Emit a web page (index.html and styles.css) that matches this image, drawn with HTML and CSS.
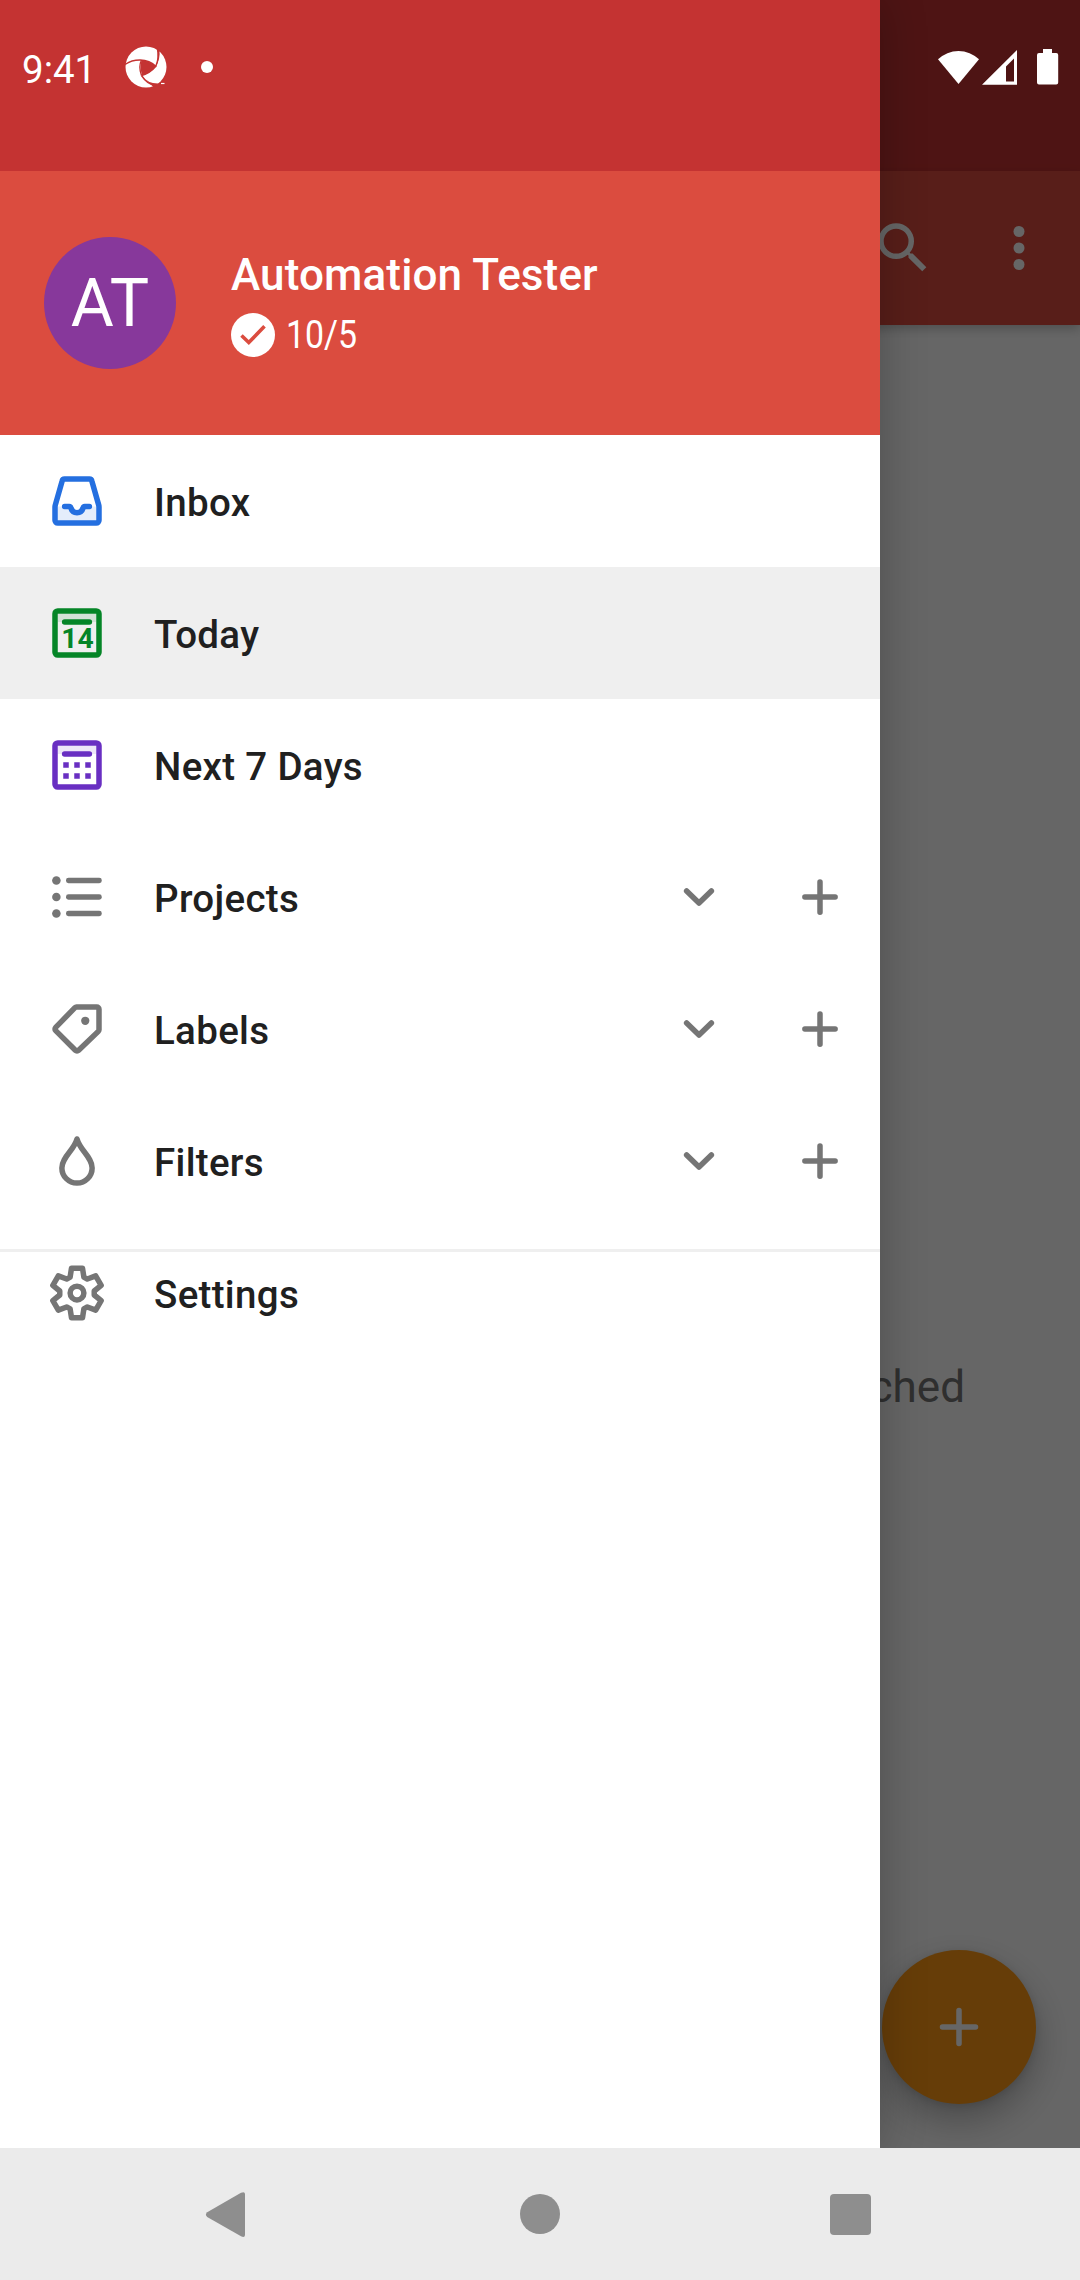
FILE: index.html
```html
<!DOCTYPE html>
<html lang="en">
<head>
<meta charset="utf-8">
<title>Todoist</title>
<link rel="stylesheet" href="styles.css">
</head>
<body>
<div class="screen">
  <main class="app">
    <div class="app-status"></div>
    <header class="toolbar">
      <svg class="icon" viewBox="0 0 24 24" fill="currentColor"><path d="M15.5 14h-.79l-.28-.27A6.47 6.47 0 0 0 16 9.5 6.5 6.5 0 1 0 9.5 16c1.61 0 3.09-.59 4.23-1.57l.27.28v.79l5 4.99L20.49 19l-4.99-5zm-6 0a4.5 4.5 0 1 1 0-9 4.5 4.5 0 0 1 0 9z"/></svg>
      <svg class="icon" viewBox="0 0 24 24" fill="currentColor"><circle cx="12" cy="6" r="2"/><circle cx="12" cy="12" r="2"/><circle cx="12" cy="18" r="2"/></svg>
    </header>
    <section class="content">
      <p class="empty">ched</p>
      <button class="fab" aria-label="Add task">
        <svg class="icon" viewBox="0 0 24 24"><path class="line" d="M12 6v12M6 12h12"/></svg>
      </button>
    </section>
  </main>
  <div class="scrim"></div>

  <aside class="drawer">
    <div class="drawer-status"></div>
    <header class="profile">
      <div class="avatar">AT</div>
      <div class="who">
        <div class="name">Automation Tester</div>
        <div class="karma">
          <svg class="check" viewBox="0 0 44 44"><circle cx="22" cy="22" r="22" fill="#fff"/><path d="M10.5 22.5l7.3 7L33.5 13.3" fill="none" stroke="#db4c3f" stroke-width="3.6"/></svg>
          <span class="count">10/5</span>
        </div>
      </div>
    </header>
    <nav class="menu">
      <a class="row">
        <svg class="icon inbox" viewBox="0 0 24 24"><path fill="currentColor" opacity=".12" d="M4.500 14H9.500c1 3 4 3 5 0H19.500V19.500H4.500z"/><path class="line" d="M7.500 4h9a.9.9 0 0 1 .9.700L19.900 13.500a3 3 0 0 1 .1.700V19a1 1 0 0 1-1 1H5a1 1 0 0 1-1-1V14.200a3 3 0 0 1 .1-.700L6.600 4.700A.9.900 0 0 1 7.500 4z"/><path class="line" d="M7.500 14h1.700c.400 0 .5.200.6.600a2.300 2.300 0 0 0 4.400 0c.1-.400.200-.600.600-.600h1.700"/></svg>
        <span class="label">Inbox</span>
      </a>
      <a class="row selected">
        <svg class="icon today" viewBox="0 0 24 24"><path fill="currentColor" opacity=".12" d="M5 5h14v3H5z"/><rect class="line" x="4" y="4" width="16" height="16" rx="1"/><path class="line" d="M7.5 8h9"/><text class="day" x="12.2" y="17.4">14</text></svg>
        <span class="label">Today</span>
      </a>
      <a class="row">
        <svg class="icon week" viewBox="0 0 24 24"><path fill="currentColor" opacity=".12" d="M5 5h14v3H5z"/><rect class="line" x="4" y="4" width="16" height="16" rx="1"/><path class="line" d="M7.5 8h9"/><path fill="currentColor" d="M7 11h2v2H7zM11 11h2v2h-2zM15 11h2v2h-2zM7 15h2v2H7zM11 15h2v2h-2zM15 15h2v2h-2z"/></svg>
        <span class="label">Next 7 Days</span>
      </a>
      <a class="row">
        <svg class="icon" viewBox="0 0 24 24" fill="currentColor"><circle cx="4.500" cy="6" r="1.550"/><circle cx="4.500" cy="12" r="1.550"/><circle cx="4.500" cy="18" r="1.550"/><rect x="8" y="5" width="13" height="2" rx=".9"/><rect x="8" y="11" width="13" height="2" rx=".9"/><rect x="8" y="17" width="13" height="2" rx=".9"/></svg>
        <span class="label">Projects</span>
        <svg class="icon" viewBox="0 0 24 24"><path class="line" d="M7.500 9.800l4.500 4.400 4.500-4.400"/></svg>
        <svg class="icon" viewBox="0 0 24 24"><path class="line" d="M12 6.500v11M6.500 12h11"/></svg>
      </a>
      <a class="row">
        <svg class="icon" viewBox="0 0 24 24"><path class="line" d="M11.800 4H19.200a.8.800 0 0 1 .8.800V12.300c0 .200-.1.400-.25.550L12.600 19.750a.85.850 0 0 1-1.200 0L4.250 12.600a.85.850 0 0 1 0-1.200L11.250 4.250c.15-.15.350-.25.550-.25z"/><circle cx="15" cy="9" r="1.500" fill="currentColor"/></svg>
        <span class="label">Labels</span>
        <svg class="icon" viewBox="0 0 24 24"><path class="line" d="M7.500 9.800l4.500 4.400 4.500-4.400"/></svg>
        <svg class="icon" viewBox="0 0 24 24"><path class="line" d="M12 6.500v11M6.500 12h11"/></svg>
      </a>
      <a class="row">
        <svg class="icon" viewBox="0 0 24 24"><path class="line" d="M12 4c-1 4-5.500 6.600-5.500 10.500a5.500 5.500 0 0 0 11 0C17.500 10.600 13 8 12 4z"/></svg>
        <span class="label">Filters</span>
        <svg class="icon" viewBox="0 0 24 24"><path class="line" d="M7.500 9.800l4.500 4.400 4.500-4.400"/></svg>
        <svg class="icon" viewBox="0 0 24 24"><path class="line" d="M12 6.500v11M6.500 12h11"/></svg>
      </a>
      <hr class="divider">
      <a class="row settings">
        <svg class="icon" viewBox="0 0 24 24"><path class="line" d="M9.500 6.200L10 3h4l.5 3.200 1.270.730 3.020-1.160 2 3.460-2.520 2.040v1.460l2.520 2.040-2 3.460-3.020-1.160-1.270.730L14 21h-4l-.5-3.200-1.270-.730-3.020 1.160-2-3.460 2.520-2.040v-1.460L3.210 9.230l2-3.460 3.020 1.160z"/><circle class="line" cx="12" cy="12" r="2.500"/></svg>
        <span class="label">Settings</span>
      </a>
    </nav>
  </aside>

  <div class="statusbar">
    <span class="clock">9:41</span>
    <svg class="logo" viewBox="0 0 42 42"><circle cx="21" cy="21" r="20.500" fill="#fff"/><g fill="none" stroke="#c43332" stroke-width="1.400"><path d="M0 18.500C8 13 22 11.500 31 20.500"/><path d="M30.500 21C33.500 14 34 9 33 3"/><path d="M31 20C27 25 22 28 16.500 29.500"/><path d="M16.500 29.500C14.500 24 14.500 18 16.500 14"/><path d="M16.500 29.500C20 35 26 39 31 39.500"/></g><path fill="#c43332" d="M16.500 14q8.500 1 14.500 6-5 7-14 9.300-2.500-8-.5-15.300zM31.500 2l3 2.500C35 10 34 15 31 20 33 14 33 8 31.500 2zM16.500 29.500Q23 38 34 37.500l-5 4z"/><path d="M36 37.500h3.500" stroke="#fff" stroke-width="1.200"/></svg>
    <span class="dot"></span>
    <svg class="system" viewBox="0 0 122 38" fill="#fff"><path d="M0 11.300a29.500 29.500 0 0 1 41 0L20.500 36z"/><path fill-rule="evenodd" d="M44 36.700L79 2v34.700zM68 18.400v15.200h8V10.500z"/><path d="M105 1h9v4h4.200a2 2 0 0 1 2 2v27.600a2 2 0 0 1-2 2h-17.200a2 2 0 0 1-2-2V7a2 2 0 0 1 2-2h4z"/></svg>
  </div>

  <footer class="navbar">
    <svg viewBox="0 0 60 60"><path d="M12.200 28.200L46 8.800q3.800-1.800 4 1.200v41q-.2 3-4 1.200L12.200 33q-2.600-2.400 0-4.800z"/></svg>
    <svg viewBox="0 0 60 60"><circle cx="30" cy="30" r="20"/></svg>
    <svg viewBox="0 0 60 60"><rect x="10" y="10" width="41" height="41" rx="4"/></svg>
  </footer>
</div>
</body>
</html>
```
FILE: styles.css
```css
* { box-sizing: border-box; }
body {
  margin: 0;
  font-family: Roboto, "Liberation Sans", sans-serif;
}
.screen {
  position: relative;
  width: 1080px;
  height: 2280px;
  overflow: hidden;
  display: flex;
  flex-direction: column;
}
.icon {
  flex: none;
  width: 66px;
  height: 66px;
  display: block;
}
.line {
  fill: none;
  stroke: currentColor;
  stroke-width: 2;
  stroke-linecap: round;
  stroke-linejoin: round;
}

/* Page behind the drawer */
.app {
  height: 2148px;
  display: flex;
  flex-direction: column;
  background: #fff;
}
.app-status, .drawer-status {
  flex: none;
  height: 171px;
  background: #c43332;
}
.toolbar {
  flex: none;
  height: 154px;
  padding-right: 28px;
  display: flex;
  justify-content: flex-end;
  align-items: center;
  gap: 50px;
  color: #fff;
  background: #db4c3f;
  box-shadow: 0 4px 10px rgba(0, 0, 0, .22);
}
.content {
  flex: 1;
  display: flex;
  flex-direction: column;
  justify-content: space-between;
  align-items: flex-end;
  padding: 1036px 44px 44px 0;
}
.empty {
  margin: 0 71px 0 0;
  font-size: 44px;
  line-height: 52px;
  color: #757575;
}
.fab {
  width: 154px;
  height: 154px;
  padding: 0;
  border: 0;
  border-radius: 50%;
  display: grid;
  place-items: center;
  color: #fff;
  background: #ff9a14;
  box-shadow: 0 16px 36px rgba(0, 0, 0, .28), 0 2px 8px rgba(0, 0, 0, .12);
}
.scrim {
  position: absolute;
  inset: 0 0 132px 0;
  background: rgba(0, 0, 0, .6);
}

/* Drawer */
.drawer {
  position: absolute;
  top: 0;
  left: 0;
  width: 880px;
  height: 2148px;
  background: #fff;
  box-shadow: 0 0 44px rgba(0, 0, 0, .24);
}
.profile {
  height: 264px;
  padding-left: 44px;
  display: flex;
  align-items: center;
  gap: 55px;
  color: #fff;
  background: #db4c3f;
}
.avatar {
  width: 132px;
  height: 132px;
  border-radius: 50%;
  font-size: 66px;
  line-height: 134px;
  text-align: center;
  background: #87389b;
}
.name {
  font-size: 44px;
  font-weight: 500;
  line-height: 52px;
  letter-spacing: .13px;
}
.karma {
  display: flex;
  align-items: center;
  gap: 11px;
  margin-top: 12px;
}
.check {
  width: 44px;
  height: 44px;
}
.count {
  font-size: 38.5px;
  line-height: 44px;
  transform: scaleX(.88);
  transform-origin: left;
}
.row {
  height: 132px;
  padding: 0 27px 0 44px;
  display: flex;
  align-items: center;
  gap: 55px;
  color: #757575;
}
.row .label {
  flex: 1;
  margin-left: -11px;
  padding-top: 3px;
  font-size: 38.5px;
  font-weight: 500;
  line-height: 45px;
  letter-spacing: .32px;
  color: #202020;
}
.selected { background: #efefef; }
.inbox { color: #246fe0; }
.today { color: #058527; }
.week { color: #692fc2; }
.day {
  font-size: 10.3px;
  font-weight: 700;
  text-anchor: middle;
  fill: currentColor;
}
.divider {
  height: 3px;
  margin: 22px 0 0;
  border: 0;
  background: #efefef;
}
.settings { height: 82px; }

/* System bars */
.statusbar {
  position: absolute;
  top: 0;
  left: 0;
  width: 1080px;
  height: 134px;
  padding: 0 20px 0 22px;
  display: flex;
  align-items: center;
  color: #fff;
}
.clock {
  width: 103px;
  font-size: 38.5px;
  line-height: 45px;
  padding-top: 4px;
}
.logo {
  width: 42px;
  height: 42px;
}
.dot {
  width: 12px;
  height: 12px;
  margin-left: 34px;
  border-radius: 50%;
  background: #fff;
}
.system {
  width: 122px;
  height: 38px;
  margin-left: auto;
}
.navbar {
  position: relative;
  height: 132px;
  padding-left: 195px;
  display: flex;
  align-items: center;
  gap: 253px;
  fill: #8e8e8e;
  background: #ebebeb;
}
.navbar svg {
  width: 60px;
  height: 60px;
}
.navbar svg:nth-child(2) { margin: 0 -3px 0 2px; }
```
